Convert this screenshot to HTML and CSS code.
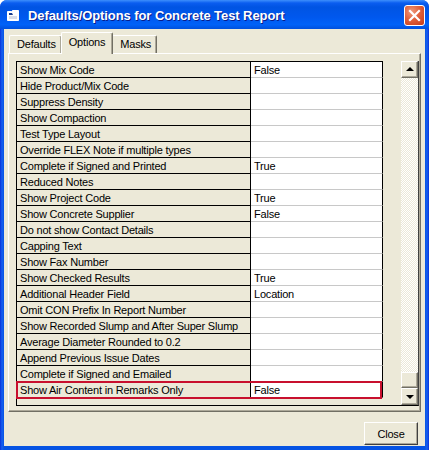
FILE: index.html
```html
<!DOCTYPE html>
<html lang="en">
<head>
  <meta charset="UTF-8">
  <title>Defaults/Options for Concrete Test Report</title>
  <link rel="stylesheet" href="styles.css">
</head>
<body>
  <div class="janela">
    <div class="titulo">
      <svg class="iconeTitulo" width="12" height="11" viewBox="0 0 12 11">
        <path d="M0.5 1.5 H4.5 L5.5 0.5 H11.5 V10.5 H0.5 Z" fill="#fff" stroke="#fff"/>
        <path d="M2 3 L5 3 L6 5 L2 5 Z" fill="#1a3c8c"/>
        <rect x="2" y="6" width="8" height="3" fill="#d8dde8"/>
      </svg>
      <span class="textoTitulo">Defaults/Options for Concrete Test Report</span>
      <button class="fechar">
        <svg width="13" height="13" viewBox="0 0 13 13">
          <path d="M2 2 L11 11 M11 2 L2 11" stroke="#fff" stroke-width="2.2" stroke-linecap="square"/>
        </svg>
      </button>
    </div>

    <div class="cliente">
      <div class="abas">
        <div class="aba">Defaults</div>
        <div class="aba ativa">Options</div>
        <div class="aba">Masks</div>
      </div>

      <div class="painel">
        <div class="grade">
          <div class="planilha">
            <div class="linha"><div class="nome">Show Mix Code</div><div class="valor">False</div></div>
            <div class="linha"><div class="nome">Hide Product/Mix Code</div><div class="valor"></div></div>
            <div class="linha"><div class="nome">Suppress Density</div><div class="valor"></div></div>
            <div class="linha"><div class="nome">Show Compaction</div><div class="valor"></div></div>
            <div class="linha"><div class="nome">Test Type Layout</div><div class="valor"></div></div>
            <div class="linha"><div class="nome">Override FLEX Note if multiple types</div><div class="valor"></div></div>
            <div class="linha"><div class="nome">Complete if Signed and Printed</div><div class="valor">True</div></div>
            <div class="linha"><div class="nome">Reduced Notes</div><div class="valor"></div></div>
            <div class="linha"><div class="nome">Show Project Code</div><div class="valor">True</div></div>
            <div class="linha"><div class="nome">Show Concrete Supplier</div><div class="valor">False</div></div>
            <div class="linha"><div class="nome">Do not show Contact Details</div><div class="valor"></div></div>
            <div class="linha"><div class="nome">Capping Text</div><div class="valor"></div></div>
            <div class="linha"><div class="nome">Show Fax Number</div><div class="valor"></div></div>
            <div class="linha"><div class="nome">Show Checked Results</div><div class="valor">True</div></div>
            <div class="linha"><div class="nome">Additional Header Field</div><div class="valor">Location</div></div>
            <div class="linha"><div class="nome">Omit CON Prefix In Report Number</div><div class="valor"></div></div>
            <div class="linha"><div class="nome">Show Recorded Slump and After Super Slump</div><div class="valor"></div></div>
            <div class="linha"><div class="nome">Average Diameter Rounded to 0.2</div><div class="valor"></div></div>
            <div class="linha"><div class="nome">Append Previous Issue Dates</div><div class="valor"></div></div>
            <div class="linha"><div class="nome">Complete if Signed and Emailed</div><div class="valor"></div></div>
            <div class="linha atual"><div class="nome">Show Air Content in Remarks Only</div><div class="valor">False</div></div>
          </div>
          <div class="rolagem">
            <div class="botaoRolar"><span class="setaCima"></span></div>
            <div class="trilho"><div class="polegar"></div></div>
            <div class="botaoRolar"><span class="setaBaixo"></span></div>
          </div>
        </div>
      </div>

      <div class="rodape">
        <button class="botaoFechar">Close</button>
      </div>
    </div>
  </div>
</body>
</html>
```

FILE: styles.css
```css
body {
    margin: 0;
    background: #fff;
    font-family: "Liberation Sans", Arial, sans-serif;
}
.janela {
    width: 429px;
    height: 450px;
    display: flex;
    flex-direction: column;
    background: linear-gradient(to right, #0831d9, #1660f0 2px, #0553e3 4px, #0553e3 425px, #1660f0 427px, #0831d9);
    border-radius: 7px 7px 0 0;
    overflow: hidden;
}
.titulo {
    height: 29px;
    flex: none;
    display: flex;
    align-items: center;
    padding: 0 4px 0 7px;
    background: linear-gradient(to bottom, #3d8ffc 0, #0a5df0 3px, #0054e3 7px, #0058ee 60%, #0062f8 85%, #0050dc 100%);
}
.iconeTitulo { margin-right: 9px; margin-top: 1px; }
.textoTitulo {
    flex: 1;
    color: #fff;
    font-weight: bold;
    font-size: 13px;
    letter-spacing: -0.08px;
    text-shadow: 1px 1px #0a1c8a;
    margin-top: 2px;
}
.fechar {
    width: 21px;
    height: 21px;
    padding: 0;
    border: 1px solid #fff;
    border-radius: 3px;
    background: radial-gradient(circle at 35% 30%, #ef9a7c 0, #e0613c 45%, #c43a16 100%);
    display: flex;
    align-items: center;
    justify-content: center;
    margin-top: 2px;
}
.cliente {
    flex: 1;
    margin: 0 4px 4px;
    background: #ece9d8;
    padding: 3px 4px 0;
    display: flex;
    flex-direction: column;
    font-size: 11px;
    letter-spacing: -0.2px;
    color: #000;
}
.abas {
    display: flex;
    height: 21px;
    padding-left: 1px;
    position: relative;
    z-index: 1;
}
.aba {
    height: 18px;
    margin-top: 3px;
    padding: 0 5px 0 7px;
    line-height: 17px;
    border: 1px solid #fff;
    border-right-color: #716f64;
    border-bottom: none;
    border-radius: 2px 2px 0 0;
    box-sizing: border-box;
    box-shadow: inset -1px 0 #aca899;
}
.aba + .aba { border-left-color: #ece9d8; }
.aba.ativa {
    height: 22px;
    margin: 0 -1px;
    padding: 0 7px 0 7px;
    line-height: 19px;
    border-left-color: #fff;
    background: #ece9d8;
    position: relative;
}
.painel {
    height: 359px;
    border: 1px solid #fff;
    border-right-color: #716f64;
    border-bottom-color: #716f64;
    box-shadow: inset -1px -1px #aca899;
    padding: 7px 1px 0 7px;
    box-sizing: border-box;
}
.grade {
    display: flex;
    height: 345px;
    border-left: 1px solid #000;
    border-bottom: 1px solid #000;
    border-right: 1px solid #404040;
    box-sizing: border-box;
}
.planilha {
    flex: 1;
}
.linha {
    display: flex;
    width: 366px;
    height: 16px;
    line-height: 16px;
    position: relative;
}
.linha:first-child { border-top: 1px solid #000; }
.nome {
    width: 234px;
    padding-left: 3px;
    border-right: 1px solid #000;
    border-bottom: 1px solid #000;
    box-sizing: border-box;
    white-space: nowrap;
    overflow: hidden;
}
.valor {
    flex: 1;
    padding-left: 3px;
    background: #fff;
    border-right: 1px solid #000;
    border-bottom: 1px solid #c8c8c8;
}
.linha.atual::after {
    content: "";
    position: absolute;
    left: -1px;
    top: -1px;
    width: 366px;
    height: 18px;
    border: 2px solid #c8102e;
    box-sizing: border-box;
}
.rolagem {
    width: 17px;
    display: flex;
    flex-direction: column;
}
.botaoRolar {
    height: 17px;
    flex: none;
    background: #ece9d8;
    border: 1px solid #fff;
    border-right-color: #716f64;
    border-bottom-color: #716f64;
    box-shadow: inset -1px -1px #aca899;
    box-sizing: border-box;
    display: flex;
    align-items: center;
    justify-content: center;
}
.setaCima, .setaBaixo {
    width: 0;
    height: 0;
    border-left: 4px solid transparent;
    border-right: 4px solid transparent;
}
.setaCima { border-bottom: 4px solid #000; margin-top: -1px; }
.setaBaixo { border-top: 4px solid #000; margin-top: 1px; }
.trilho {
    flex: 1;
    display: flex;
    flex-direction: column;
    justify-content: flex-end;
    background-color: #ece9d8;
    background-image: conic-gradient(#fff 25%, #ece9d8 0 50%, #fff 0 75%, #ece9d8 0);
    background-size: 2px 2px;
}
.polegar {
    height: 16px;
    background: #ece9d8;
    border: 1px solid #fff;
    border-right-color: #716f64;
    border-bottom-color: #716f64;
    box-shadow: inset -1px -1px #aca899;
    box-sizing: border-box;
}
.rodape {
    display: flex;
    justify-content: flex-end;
    padding: 10px 3px 0 0;
}
.botaoFechar {
    width: 54px;
    height: 23px;
    font-family: "Liberation Sans", Arial, sans-serif;
    font-size: 11px;
    letter-spacing: -0.2px;
    background: #ece9d8;
    border: 1px solid #fff;
    border-right-color: #404040;
    border-bottom-color: #404040;
    box-shadow: inset -1px -1px #aca899;
    padding: 0;
    color: #000;
}
```
